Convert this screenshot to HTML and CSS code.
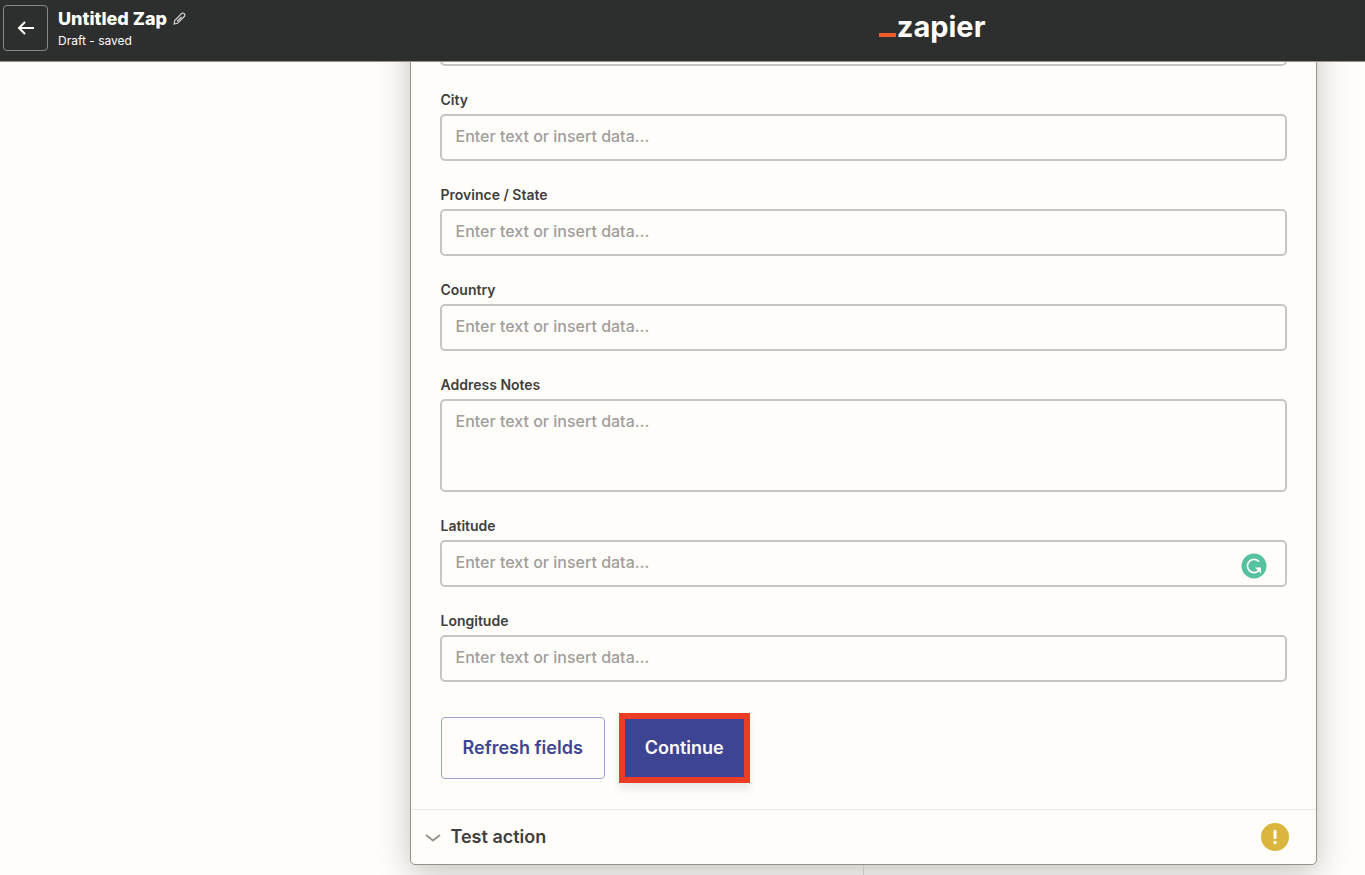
FILE: index.html
```
<!DOCTYPE html>
<html lang="en">
  <head>
    <meta charset="UTF-8" />
    <meta name="viewport" content="width=device-width, initial-scale=1.0" />
    <title>Untitled Zap</title>
    <link rel="stylesheet" href="styles.css">
  </head>
  <body>
    <header class="topbar">
      <button class="back" aria-label="Back">
        <svg width="20" height="20" viewBox="0 0 20 20" fill="none" stroke="currentColor" stroke-width="2">
          <path d="M18 10H3M9 4L3 10l6 6" />
        </svg>
      </button>
      <div class="zap-info">
        <h1 class="zap-name">
          Untitled Zap
          <button class="rename" aria-label="Rename">
            <svg width="14" height="14" viewBox="0 0 14 14" fill="none" stroke="currentColor" stroke-width="1.2">
              <path d="M2 12l.7-3.500 6.800-6.800a1.700 1.700 0 0 1 2.800 2.800L5.500 11.300zM9.500 5L5 9.500" />
            </svg>
          </button>
        </h1>
        <p class="status">Draft - saved</p>
      </div>
      <a class="logo" href="#"><span class="logo-bar"></span>zapier</a>
    </header>

    <main class="editor">
      <section class="card">
        <form class="fields">
          <div class="field">
            <input type="text" aria-label="Address" />
          </div>
          <div class="field">
            <label for="city">City</label>
            <input type="text" id="city" placeholder="Enter text or insert data..." />
          </div>
          <div class="field">
            <label for="province">Province / State</label>
            <input type="text" id="province" placeholder="Enter text or insert data..." />
          </div>
          <div class="field">
            <label for="country">Country</label>
            <input type="text" id="country" placeholder="Enter text or insert data..." />
          </div>
          <div class="field">
            <label for="notes">Address Notes</label>
            <textarea id="notes" placeholder="Enter text or insert data..."></textarea>
          </div>
          <div class="field">
            <label for="latitude">Latitude</label>
            <input type="text" id="latitude" placeholder="Enter text or insert data..." />
            <svg class="grammar" width="26" height="26" viewBox="0 0 26 26" fill="none">
              <circle cx="13" cy="13" r="12.500" fill="#56c1a0" />
              <path d="M18 8.600A6.600 6.600 0 1 0 17.500 17.800" stroke="#fffdf9" stroke-width="1.700" />
              <path d="M14 14.500h6v6z" fill="#fffdf9" />
            </svg>
          </div>
          <div class="field">
            <label for="longitude">Longitude</label>
            <input type="text" id="longitude" placeholder="Enter text or insert data..." />
          </div>
          <div class="actions">
            <button type="button" class="btn btn-outline">Refresh fields</button>
            <button type="button" class="btn btn-primary">Continue</button>
          </div>
        </form>
        <button class="test-row">
          <svg width="16" height="16" viewBox="0 0 16 16" fill="none" stroke="#95928e" stroke-width="1.800">
            <path d="M1 6l7 5.500 7-5.500" />
          </svg>
          <span class="test-title">Test action</span>
          <svg width="28" height="28" viewBox="0 0 28 28">
            <circle cx="14" cy="14" r="14" fill="#dab63e" />
            <rect x="12.500" y="7" width="3" height="9" rx="1" fill="#fffdf9" />
            <circle cx="14" cy="19.500" r="1.800" fill="#fffdf9" />
          </svg>
        </button>
      </section>
      <div class="connector"></div>
    </main>
  </body>
</html>
```
FILE: styles.css
```
* {
  box-sizing: border-box;
}
body {
  margin: 0;
  height: 100vh;
  overflow: hidden;
  display: flex;
  flex-direction: column;
  font-family: Inter, "Liberation Sans", sans-serif;
  background: #fffdf9;
  color: #403f3e;
}
button {
  font-family: inherit;
  cursor: pointer;
}
.topbar {
  position: relative;
  z-index: 1;
  flex: none;
  display: flex;
  align-items: flex-start;
  height: 62px;
  padding: 5px 3px;
  background: #2d2e2e;
  border-bottom: 1px solid #95928e;
  color: #fffdf9;
}
.back {
  display: flex;
  align-items: center;
  justify-content: center;
  width: 45px;
  height: 46px;
  padding: 0;
  background: none;
  border: 1px solid #88888a;
  border-radius: 4px;
  color: inherit;
}
.zap-info {
  flex: 1;
  padding: 2px 0 0 10px;
}
.zap-name {
  display: flex;
  align-items: center;
  gap: 5px;
  margin: 0;
  font-size: 18px;
  line-height: 24px;
  font-weight: 800;
}
.rename {
  display: flex;
  padding: 0;
  background: none;
  border: none;
  color: #d7d5d2;
}
.status {
  margin: 0;
  font-size: 12px;
  line-height: 20px;
}
.logo {
  display: flex;
  width: 36%;
  padding-left: 6px;
  color: inherit;
  font-size: 29px;
  line-height: 44px;
  font-weight: 700;
  text-decoration: none;
}
.logo-bar {
  width: 17px;
  height: 4px;
  margin: 28px 1px 0 0;
  background: #f0592a;
}
.editor {
  flex: 1;
  display: flex;
  flex-direction: column;
  min-height: 0;
  margin: -62px 48px 0 30%;
}
.card {
  flex: none;
  background: #fffdf9;
  border: 1px solid #95928e;
  border-radius: 5px;
  box-shadow: 0 8px 32px rgba(45, 46, 46, 0.28);
}
.fields {
  padding: 18px 29px 26px;
}
.field {
  position: relative;
  margin-bottom: 24px;
}
.field label {
  display: block;
  margin-bottom: 4px;
  padding-left: 1px;
  font-size: 14px;
  line-height: 20px;
  font-weight: 600;
}
.field input,
.field textarea {
  display: block;
  width: 100%;
  height: 47px;
  padding: 0 14px 3px;
  background: #fffdf9;
  border: 2px solid #c7c5c2;
  border-radius: 5px;
  color: #403f3e;
  font-family: inherit;
  font-size: 16px;
  line-height: 24px;
  font-weight: 500;
}
.field textarea {
  height: 93px;
  padding-top: 8px;
  resize: none;
}
.field ::placeholder {
  color: #a09e9b;
  opacity: 1;
}
.grammar {
  position: absolute;
  right: 20px;
  bottom: 8px;
}
.actions {
  display: flex;
  align-items: center;
  gap: 14px;
  margin-top: 31px;
  padding-left: 1px;
}
.btn {
  font-size: 18px;
  line-height: 24px;
  font-weight: 600;
}
.btn-outline {
  padding: 18px 21px;
  background: #fffdf9;
  border: 1px solid #9fa2ce;
  border-radius: 4px;
  color: #3d4592;
}
.btn-primary {
  padding: 17px 20px;
  height: 70px;
  background: #3d4592;
  border: 6px solid #ec3d24;
  box-shadow: 0 6px 8px rgba(45, 46, 46, 0.1);
  color: #fffdf9;
}
.test-row {
  display: flex;
  align-items: center;
  gap: 10px;
  width: 100%;
  height: 55px;
  padding: 0 27px 0 14px;
  background: none;
  border: none;
  border-top: 1px solid #e8e7e4;
  color: #403f3e;
}
.test-title {
  flex: 1;
  font-size: 18px;
  line-height: 24px;
  font-weight: 600;
  text-align: left;
}
.connector {
  flex: 1;
  width: 1px;
  margin: 0 auto;
  background: #c7c5c2;
}
```
